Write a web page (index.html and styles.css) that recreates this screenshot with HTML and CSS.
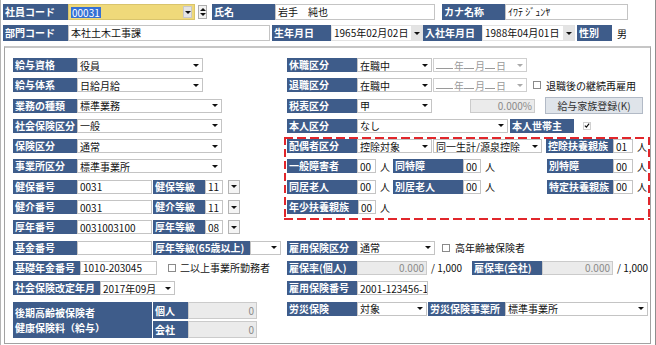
FILE: index.html
```html
<!DOCTYPE html>
<html lang="ja">
<head>
    <meta charset="UTF-8">
    <meta name="viewport" content="width=device-width, initial-scale=1.0">
    <title>社員情報</title>
    <link rel="stylesheet" href="styles.css">
</head>
<body>
<div class="frame">
    <!-- 上部：社員基本 -->
    <div class="head">
        <div class="hrow">
            <span class="lbl w65">社員コード</span>
            <span class="fld code w127"><span class="pick">00031</span><span class="dbtn"><i class="tri"></i></span></span>
            <span class="spin"><i class="tri up"></i><i class="tri"></i></span>
            <span class="lbl w63 ml5">氏名</span>
            <span class="fld w160">岩手　純也</span>
            <span class="lbl w63 ml7">カナ名称</span>
            <span class="fld w123">ｲﾜﾃ ｼﾞｭﾝﾔ</span>
        </div>
        <div class="hrow">
            <span class="lbl w65">部門コード</span>
            <span class="fld w202">本社土木工事課</span>
            <span class="lbl w59 ml2">生年月日</span>
            <span class="fld sel date w92">1965年02月02日<span class="dbtn"><i class="tri"></i></span></span>
            <span class="lbl w59">入社年月日</span>
            <span class="fld sel date w93">1988年04月01日<span class="dbtn"><i class="tri"></i></span></span>
            <span class="lbl w35 ml2">性別</span>
            <span class="ml5">男</span>
        </div>
    </div>

    <!-- 下部：給与・社会保険 -->
    <div class="panel">
        <div class="col left">
            <div class="row"><span class="lbl w64">給与資格</span><span class="fld sel w126">役員<i class="tri"></i></span></div>
            <div class="row"><span class="lbl w64">給与体系</span><span class="fld sel w126">日給月給<i class="tri"></i></span></div>
            <div class="row"><span class="lbl w64">業務の種類</span><span class="fld sel w145">標準業務<i class="tri"></i></span></div>
            <div class="row"><span class="lbl w64">社会保険区分</span><span class="fld sel w145">一般<i class="tri"></i></span></div>
            <div class="row"><span class="lbl w64">保険区分</span><span class="fld sel w145">通常<i class="tri"></i></span></div>
            <div class="row"><span class="lbl w64">事業所区分</span><span class="fld sel w145">標準事業所<i class="tri"></i></span></div>
            <div class="row">
                <span class="lbl w64">健保番号</span><span class="fld w75">0031</span>
                <span class="lbl w52 ml1">健保等級</span><span class="fld w18">11</span><span class="abtn ml5"><i class="tri"></i></span>
            </div>
            <div class="row">
                <span class="lbl w64">健介番号</span><span class="fld w75">0031</span>
                <span class="lbl w52 ml1">健介等級</span><span class="fld w18">11</span><span class="abtn ml5"><i class="tri"></i></span>
            </div>
            <div class="row">
                <span class="lbl w64">厚年番号</span><span class="fld w75">0031003100</span>
                <span class="lbl w52 ml1">厚年等級</span><span class="fld w18">08</span><span class="abtn ml5"><i class="tri"></i></span>
            </div>
            <div class="row">
                <span class="lbl w64">基金番号</span><span class="fld w75"></span>
                <span class="lbl w97 ml1">厚年等級(65歳以上)</span><span class="fld sel end w31"><i class="tri"></i></span>
            </div>
            <div class="row">
                <span class="lbl w67">基礎年金番号</span><span class="fld w77">1010-203045</span>
                <span class="chk ml11"></span><span class="ml4">二以上事業所勤務者</span>
            </div>
            <div class="row">
                <span class="lbl w87">社会保険改定年月</span><span class="fld sel w75">2017年09月<i class="tri"></i></span>
            </div>
            <div class="kouki">
                <div class="lbl tall w139"><span>後期高齢被保険者</span><span>健康保険料（給与）</span></div>
                <div class="kcol">
                    <div class="krow"><span class="lbl w35">個人</span><span class="fld dis num w69">0</span></div>
                    <div class="krow"><span class="lbl w35">会社</span><span class="fld dis num w69">0</span></div>
                </div>
            </div>
        </div>

        <div class="col right">
            <div class="row">
                <span class="lbl w70">休職区分</span><span class="fld sel w75">在職中<i class="tri"></i></span>
                <span class="fld sel off ml1 w94"><span class="blank"><u class="y"></u>年<u></u>月<u></u>日</span><i class="tri"></i></span>
            </div>
            <div class="row">
                <span class="lbl w70">退職区分</span><span class="fld sel w75">在職中<i class="tri"></i></span>
                <span class="fld sel off ml1 w94"><span class="blank"><u class="y"></u>年<u></u>月<u></u>日</span><i class="tri"></i></span>
                <span class="chk ml6"></span><span class="ml5">退職後の継続再雇用</span>
            </div>
            <div class="row">
                <span class="lbl w70">税表区分</span><span class="fld sel w75">甲<i class="tri"></i></span>
                <span class="fld dis num ml38 w65">0.000%</span>
                <span class="pbtn ml10">給与家族登録(K)</span>
            </div>
            <div class="row">
                <span class="lbl w70">本人区分</span><span class="fld sel w151">なし<i class="tri"></i></span>
                <span class="lbl w64 ml2">本人世帯主</span>
                <span class="chk on ml9"><svg width="7" height="7" viewBox="0 0 7 7"><path d="M1 3.6 L2.8 5.4 L6 1.4" fill="none" stroke="#111" stroke-width="1.4"/></svg></span>
            </div>

            <!-- 扶養控除 -->
            <div class="box">
                <div class="row">
                    <span class="lbl w70">配偶者区分</span><span class="fld sel w75">控除対象<i class="tri"></i></span>
                    <span class="fld sel ml1 w109">同一生計/源泉控除<i class="tri"></i></span>
                    <span class="lbl w67 ml4">控除扶養親族</span><span class="fld w20">01</span><span class="unit">人</span>
                </div>
                <div class="row">
                    <span class="cell c1"><span class="lbl w70">一般障害者</span><span class="fld w19">00</span><span class="unit">人</span></span>
                    <span class="cell c2"><span class="lbl w70">同特障</span><span class="fld w18">00</span><span class="unit">人</span></span>
                    <span class="cell"><span class="lbl w66">別特障</span><span class="fld w20">00</span><span class="unit">人</span></span>
                </div>
                <div class="row">
                    <span class="cell c1"><span class="lbl w70">同居老人</span><span class="fld w19">00</span><span class="unit">人</span></span>
                    <span class="cell c2"><span class="lbl w70">別居老人</span><span class="fld w18">00</span><span class="unit">人</span></span>
                    <span class="cell"><span class="lbl w66">特定扶養親族</span><span class="fld w20">00</span><span class="unit">人</span></span>
                </div>
                <div class="row">
                    <span class="cell c1"><span class="lbl w71">年少扶養親族</span><span class="fld w18">00</span><span class="unit">人</span></span>
                </div>
            </div>

            <div class="row">
                <span class="lbl w70">雇用保険区分</span><span class="fld sel w78">通常<i class="tri"></i></span>
                <span class="chk ml7"></span><span class="ml5">高年齢被保険者</span>
            </div>
            <div class="row">
                <span class="cell c3"><span class="lbl w70">雇保率(個人)</span><span class="fld dis num w70">0.000</span><span class="ml4">/ 1,000</span></span>
                <span class="lbl w70">雇保率(会社)</span><span class="fld dis num w71">0.000</span><span class="ml4">/ 1,000</span>
            </div>
            <div class="row">
                <span class="lbl w70">雇用保険番号</span><span class="fld w71">2001-123456-1</span>
            </div>
            <div class="row">
                <span class="lbl w70">労災保険</span><span class="fld sel w70">対象<i class="tri"></i></span>
                <span class="lbl w77 ml1">労災保険事業所</span><span class="fld sel w143">標準事業所<i class="tri"></i></span>
            </div>
        </div>
    </div>
</div>
</body>
</html>
```

FILE: styles.css
```css
* {
    box-sizing: border-box;
}
body {
    margin: 0;
    font-family: "Noto Sans CJK JP", "Noto Sans", sans-serif;
    font-size: 10px;
    color: #111;
    background: #fff;
}
.frame {
    width: 656px;
    height: 345px;
    overflow: hidden;
    border-left: 1px solid #b4b4b4;
    border-right: 1px solid #8e8e8e;
}

/* 上部 */
.head {
    padding: 4px 0 0 2px;
}
.hrow {
    display: flex;
    align-items: center;
    height: 16px;
}
.hrow + .hrow {
    margin-top: 5px;
}
.hrow .lbl,
.hrow .fld {
    height: 16px;
    line-height: 16px;
}

/* 下部パネル */
.panel {
    display: flex;
    height: 298px;
    margin: 5px 4px 0 3px;
    padding: 10px 0 0 8px;
    border: 1px solid #a2a2a2;
    border-top: 2px solid #c6c6c6;
}
.col {
    display: flex;
    flex-direction: column;
    gap: 6.3px;
}
.left {
    width: 274px;
}
.right {
    width: 363px;
}
.row {
    display: flex;
    align-items: center;
    height: 14px;
    white-space: nowrap;
}

/* ラベル */
.lbl {
    flex: none;
    height: 14px;
    line-height: 14px;
    padding-left: 2px;
    background: #3e5c8a;
    color: #fff;
    font-weight: bold;
    white-space: nowrap;
    overflow: hidden;
}
.lbl.tall {
    height: 36px;
    display: flex;
    flex-direction: column;
    justify-content: center;
    line-height: 15px;
}

/* 入力欄 */
.fld {
    flex: none;
    display: flex;
    align-items: center;
    height: 14px;
    padding: 0 2px;
    background: #fff;
    border: 1px solid #c4c4c4;
    white-space: nowrap;
    overflow: hidden;
}
.sel {
    justify-content: space-between;
    padding-right: 3px;
}
.sel.end {
    justify-content: flex-end;
}
.num {
    justify-content: flex-end;
}
.dis {
    background: #ebebeb;
    border-color: #cbcbcb;
    color: #8a8a8a;
}
.off {
    color: #9a9a9a;
    border-color: #cfcfcf;
}
.off .tri {
    border-top-color: #aaa;
}
.blank {
    display: flex;
    align-items: center;
}
.blank u {
    display: block;
    width: 10px;
    height: 8px;
    margin-right: 1px;
    border-bottom: 1px solid #9a9a9a;
}
.blank u.y {
    width: 17px;
}
.code {
    background: #efd97a;
    border-color: #d9c46c;
    justify-content: space-between;
    padding: 0 2px;
}
.pick {
    background: #3570d4;
    color: #fff;
    line-height: 11px;
    padding: 0 1px;
}
.date {
    border-color: #e2e2e2;
    padding-right: 0;
}
.dbtn {
    display: flex;
    align-items: center;
    justify-content: center;
    width: 9px;
    height: 12px;
    background: #e4e4e4;
    border: 1px solid #c8c8c8;
}
.date .dbtn {
    width: 11px;
    height: 14px;
    border: none;
}

.tri {
    display: block;
    width: 0;
    height: 0;
    border-left: 3px solid transparent;
    border-right: 3px solid transparent;
    border-top: 3px solid #111;
}
.tri.up {
    border-top: none;
    border-bottom: 3px solid #111;
}
.spin {
    display: flex;
    flex-direction: column;
    align-items: center;
    justify-content: space-evenly;
    width: 9px;
    height: 14px;
    margin-left: 3px;
    background: #f2f2f2;
    border: 1px solid #adadad;
}
.abtn {
    display: flex;
    align-items: center;
    justify-content: center;
    width: 12px;
    height: 14px;
    background: #f4f4f4;
    border: 1px solid #b4b4b4;
}
.chk {
    display: flex;
    align-items: center;
    justify-content: center;
    width: 8px;
    height: 8px;
    background: #fff;
    border: 1px solid #8a8a8a;
}
.chk.on {
    border-color: #d0d0d0;
}
.pbtn {
    flex: none;
    width: 98px;
    height: 17px;
    line-height: 15px;
    text-align: center;
    background: #dfe4ea;
    border: 1px solid #b2bac6;
    color: #333;
}
.unit {
    margin-left: 4px;
}

/* 扶養控除の枠 */
.box {
    display: flex;
    flex-direction: column;
    gap: 6.3px;
    margin: -2px 0 14.3px -3px;
    padding: 2px 0 6px 3px;
    background:
        repeating-linear-gradient(90deg, #e1262b 0 9px, transparent 9px 13px) top left / 100% 2px no-repeat,
        repeating-linear-gradient(90deg, #e1262b 0 9px, transparent 9px 13px) bottom left / 100% 2px no-repeat,
        repeating-linear-gradient(180deg, #e1262b 0 8px, transparent 8px 12px) top left / 2px 100% no-repeat,
        repeating-linear-gradient(180deg, #e1262b 0 8px, transparent 8px 12px) top right / 2px 100% no-repeat;
}
.cell {
    display: flex;
    align-items: center;
}
.c1 {
    width: 106px;
}
.c2 {
    width: 154px;
}
.c3 {
    width: 185px;
}

/* 後期高齢 */
.kouki {
    display: flex;
    height: 36px;
}
.kcol {
    display: flex;
    flex-direction: column;
    gap: 2px;
    margin-left: 1px;
}
.krow {
    display: flex;
    height: 17px;
}
.krow .lbl,
.krow .fld {
    height: 17px;
    line-height: 17px;
}

/* 幅・余白 */
.w18 { width: 18px; }
.w19 { width: 19px; }
.w20 { width: 20px; }
.w31 { width: 31px; }
.w35 { width: 35px; }
.w52 { width: 52px; }
.w59 { width: 59px; }
.w63 { width: 63px; }
.w64 { width: 64px; }
.w65 { width: 65px; }
.w66 { width: 66px; }
.w67 { width: 67px; }
.w69 { width: 69px; }
.w70 { width: 70px; }
.w71 { width: 71px; }
.w75 { width: 75px; }
.w77 { width: 77px; }
.w78 { width: 78px; }
.w87 { width: 87px; }
.w92 { width: 92px; }
.w93 { width: 93px; }
.w94 { width: 94px; }
.w97 { width: 97px; }
.w109 { width: 109px; }
.w123 { width: 123px; }
.w126 { width: 126px; }
.w127 { width: 127px; }
.w139 { width: 139px; }
.w143 { width: 143px; }
.w145 { width: 145px; }
.w151 { width: 151px; }
.w160 { width: 160px; }
.w202 { width: 202px; }
.ml1 { margin-left: 1px; }
.ml2 { margin-left: 2px; }
.ml4 { margin-left: 4px; }
.ml5 { margin-left: 5px; }
.ml6 { margin-left: 6px; }
.ml7 { margin-left: 7px; }
.ml9 { margin-left: 9px; }
.ml10 { margin-left: 10px; }
.ml11 { margin-left: 11px; }
.ml38 { margin-left: 38px; }
```
